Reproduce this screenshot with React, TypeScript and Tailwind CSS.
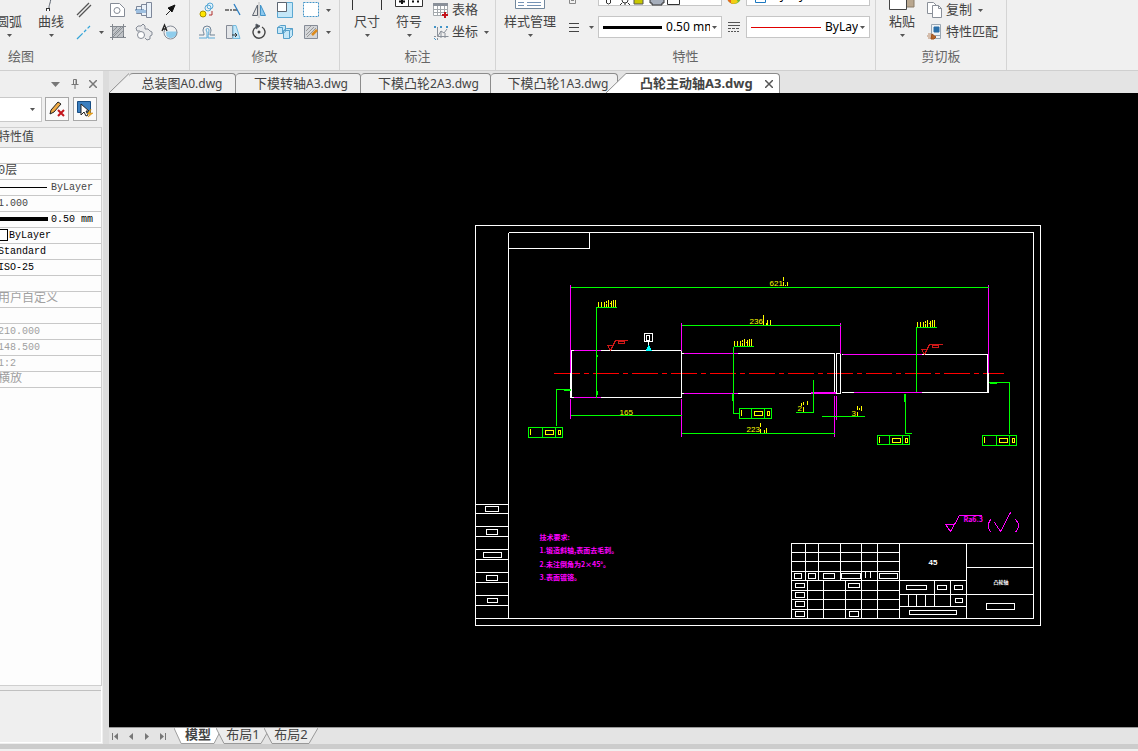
import { ReactNode } from "react";

interface DocTab {
  title: string;
  suffix: string;
  className: string;
}

interface PropertyRow {
  value: string;
  tone: string;
  sample?: "thin" | "thick" | "swatch";
}

export default function App() {
  return (
    <div className="flex h-screen flex-col overflow-hidden bg-[#f0f0f0] text-[13px] text-[#444] font-['Noto_Sans','Noto_Sans_CJK_SC',sans-serif]">
      <Ribbon />
      <div className="flex min-h-0 flex-1">
        <PropertiesPanel />
        <main className="flex min-w-0 flex-1 flex-col">
          <DocumentTabs />
          <div className="min-h-0 flex-1 bg-black">
            <Drawing />
          </div>
          <LayoutTabs />
        </main>
      </div>
      <footer className="h-[7px] border-b-2 border-[#f0f0f0] bg-[#ccc]" />
    </div>
  );
}

/* ---------- ribbon ---------- */

function Caret() {
  return (
    <svg width="5" height="3" viewBox="0 0 5 3" className="shrink-0" aria-hidden="true">
      <path d="M0 0h5L2.5 3z" fill="#555" />
    </svg>
  );
}

function Icon({ children }: { children: ReactNode }) {
  return (
    <svg width="18" height="18" viewBox="0 0 18 18" fill="none" stroke="#5d6570" strokeWidth="1" className="shrink-0" aria-hidden="true">
      {children}
    </svg>
  );
}

function RibbonGroup({ title, className, children }: { title: string; className: string; children: ReactNode }) {
  return (
    <section className={`flex shrink-0 flex-col border-r border-[#d4d4d4] ${className}`}>
      <div className="flex h-11 items-start">{children}</div>
      <h2 className="text-center leading-6 text-[#666]">{title}</h2>
    </section>
  );
}

function BigButton({ label, icon }: { label: string; icon?: ReactNode }) {
  return (
    <button className="-mt-[21px] flex shrink-0 flex-col items-center whitespace-nowrap">
      <svg width="32" height="32" viewBox="0 0 32 32" fill="none" stroke="#5d6570" className="-mx-1" aria-hidden="true">
        {icon}
      </svg>
      <span className="leading-5">{label}</span>
      <span className="flex h-2 items-center">
        <Caret />
      </span>
    </button>
  );
}

function IconButton({ label, caret, children }: { label: string; caret?: boolean; children: ReactNode }) {
  return (
    <button aria-label={label} className="flex h-[22px] items-center gap-1.5">
      <Icon>{children}</Icon>
      {caret && <Caret />}
    </button>
  );
}

function TextButton({ label, caret, children }: { label: string; caret?: boolean; children: ReactNode }) {
  return (
    <button className="flex h-[22px] items-center gap-0.5 whitespace-nowrap">
      <Icon>{children}</Icon>
      <span>{label}</span>
      {caret && (
        <span className="ml-1">
          <Caret />
        </span>
      )}
    </button>
  );
}

function Ribbon() {
  return (
    <header className="flex h-[71px] shrink-0 overflow-hidden border-b border-[#cfcfcf]">
      <RibbonGroup title="绘图" className="w-[190px] pr-[148px] [&>h2]:w-[42px]">
        <div className="-ml-1 flex gap-4">
          <BigButton label="圆弧" />
          <BigButton
            label="曲线"
            icon={
              <>
                <path d="M14 29C14 25 16 24 16 16" />
                <rect x="11.500" y="29.500" width="3" height="3" fill="#fff" stroke="#333" />
              </>
            }
          />
          <div className="-mt-px -ml-[5px] grid shrink-0 grid-cols-[34px_26px_26px_26px]">
            <IconButton label="平行线">
              <path d="M2 14L14 2M4 16L16 4" stroke="#555" strokeWidth="1.300" />
            </IconButton>
            <IconButton label="轮廓">
              <path d="M1.500 2.500h9l5 5v8h-14z" fill="#fff" stroke="#858b96" />
              <circle cx="8" cy="9.500" r="3" stroke="#858b96" />
            </IconButton>
            <IconButton label="轴">
              <path d="M1.500 5.500h5v7h-5zM6.500 3.500h5v11h-5zM11.500 1.500h5v15h-5z" fill="#eaf1f8" stroke="#7d879a" />
              <path d="M0 9h9" stroke="#3d6d9e" />
              <path d="M1 9h10v3H1z" fill="#9dbfe0" stroke="none" />
            </IconButton>
            <IconButton label="箭头">
              <path d="M5 14L10 9" stroke="#222" />
              <path d="M14 4L7 7l4 4z" fill="#111" stroke="#111" />
            </IconButton>
            <IconButton label="中心线" caret>
              <path d="M2 16L15 3" stroke="#35a5d8" strokeWidth="1.300" strokeDasharray="8 2 3 2" />
            </IconButton>
            <IconButton label="填充">
              <path d="M3.500 3.500h11v11h-11z" fill="#bfc2c6" />
              <path d="M1 3.500h16M1 14.500h16M3.500 1v16M14.500 1v12" stroke="#848990" />
              <path d="M4 8l4-4M4 12l8-8M4 14l10-10M8 14l6-6" stroke="#8b9095" />
            </IconButton>
            <IconButton label="齿轮">
              <path
                d="M6 9l-1-1H2l-1-3 2-2h3l2-2 2 2v3h3l2 2 2 1v3l-2 1v3l-3 1-2-2"
                fill="#e8e9eb"
                stroke="#858b96"
              />
              <circle cx="6" cy="12" r="3.500" fill="#fff" stroke="#858b96" />
            </IconButton>
            <IconButton label="局部放大">
              <path d="M5.500 9h10.500a6 6 0 0 1-10 4z" fill="#8fcdec" stroke="#8fcdec" />
              <circle cx="9.500" cy="9.500" r="6.500" stroke="#858b96" />
              <path d="M1 8l2.500-6L6 8M2 6h3" stroke="#222" strokeWidth="1.300" />
            </IconButton>
          </div>
        </div>
      </RibbonGroup>

      <RibbonGroup title="修改" className="w-[150px]">
        <div className="-mt-px ml-2 grid grid-cols-[26px_26px_26px_26px_30px]">
          <IconButton label="复制对象">
            <circle cx="5" cy="13" r="3" fill="#ffe600" stroke="#a79000" />
            <circle cx="12" cy="5" r="3" fill="#e3f3fc" stroke="#5aa9d6" />
            <circle cx="10" cy="7" r="3" stroke="#5aa9d6" />
            <path d="M11 14h3v-4" stroke="#b0302f" />
          </IconButton>
          <IconButton label="修剪">
            <path d="M1 9h4M6 9h2M9 9h4" stroke="#555" strokeWidth="1.300" />
            <path d="M10 3l6 11" stroke="#2b7fc4" strokeWidth="1.300" />
          </IconButton>
          <IconButton label="镜像">
            <path d="M7.500 4v10.500h-5z" fill="#e3e3e3" />
            <path d="M10.500 4v10.500h5z" fill="#8cc8ee" stroke="#4294c8" />
            <path d="M9 1v16" stroke="#bbb" />
          </IconButton>
          <IconButton label="缩放">
            <path d="M1.500 1.500h15v15h-15z" fill="#c4e7f8" stroke="#5ba8d2" />
            <path d="M1.500 1.500h9v9h-9z" fill="#fff" />
          </IconButton>
          <IconButton label="拉伸" caret>
            <path d="M1.500 1.500h15v14h-15z" fill="#fff" stroke="#4294c8" strokeDasharray="2 1" />
          </IconButton>
          <IconButton label="偏移">
            <path d="M1 12h5c0-3-1-3-1-5a4 4 0 0 1 8 0c0 2-1 2-1 5h5" stroke="#6f8295" />
            <path d="M1 15h8V9c0-1-1-1-1-2a1 1 0 0 1 3 0c0 3-1 4-1 8h7" stroke="#5aa9d6" />
          </IconButton>
          <IconButton label="拉长">
            <path d="M2.500 2.500h6v13h-6z" fill="#e3e5e8" stroke="#858b96" />
            <path d="M9 2.500h3l4 13H9z" fill="#c4e7f8" stroke="#74bce0" />
            <path d="M8 12h5M11 10l2 2-2 2" stroke="#333" />
          </IconButton>
          <IconButton label="旋转">
            <path d="M6 4a6 6 0 1 0 6 0" stroke="#444" strokeWidth="1.400" />
            <path d="M6 1v5l4-3z" fill="#444" />
            <circle cx="9" cy="9" r="1.500" fill="#444" stroke="none" />
          </IconButton>
          <IconButton label="分解">
            <path d="M1.500 4.500l3-2h5v6l-3 2h-5zM7.500 7.500l3-2h6v7l-3 3h-6zM1.500 4.500h5v6M7.500 7.500h6v8M13.500 7.500l3-2" fill="#c4e7f8" stroke="#559fc9" />
          </IconButton>
          <IconButton label="编辑填充" caret>
            <path d="M2.500 2.500h13v13h-13z" fill="#d4d6d9" stroke="#858b96" />
            <path d="M4 8l5-5M4 12l8-8M5 14l9-9" stroke="#999" />
            <path d="M10 12l5-5" stroke="#dc8b1e" strokeWidth="2.500" />
          </IconButton>
        </div>
      </RibbonGroup>

      <RibbonGroup title="标注" className="w-[156px]">
        <div className="ml-3.5 flex gap-4">
          <BigButton label="尺寸" icon={<path d="M1.500 8v23M30.500 8v23" stroke="#333" />} />
          <BigButton
            label="符号"
            icon={
              <>
                <path d="M2.500 12v15.500h27V12M15.500 12v15" fill="#fff" stroke="#333" />
                <path d="M6 22.500h6M9 20v5M19 22.500h2M24 22.500h2" stroke="#111" strokeWidth="2" />
              </>
            }
          />
        </div>
        <div className="-mt-px ml-2.5">
          <TextButton label="表格">
            <path d="M1.500 2.500h14v12h-14zM1.500 8.500h14M1.500 11.500h14M5.500 5v9.500M8.500 5v9.500M12.500 5v9.500" fill="#fff" stroke="#a4a9ad" />
            <path d="M1 2h15v3H1z" fill="#8a9099" stroke="none" />
            <path d="M13 11v6M10 14h6" stroke="#c3141c" strokeWidth="2" />
          </TextButton>
          <TextButton label="坐标" caret>
            <path d="M5.500 4v9.500h11M2 13.500h2M5.500 15v2M6 13l3-5 3 2 3-4M9 8v7M13 10v5" stroke="#8a9099" />
            <path d="M2 3l2 2M4 3L2 5M8 3l2 2M10 3L8 5M14 3l2 2M16 3l-2 2M2 15l2 2" stroke="#4294c8" />
          </TextButton>
        </div>
      </RibbonGroup>

      <RibbonGroup title="特性" className="w-[380px]">
        <div className="ml-2 flex shrink-0">
          <BigButton
            label="样式管理"
            icon={
              <>
                <path d="M1.500 8.500h29v21h-29z" fill="#fff" stroke="#71879c" />
                <path d="M4 23.500h6M13 23.500h14M4 26.500h6M13 26.500h14" stroke="#7593b5" />
              </>
            }
          />
        </div>
        <div className="-mt-[17px] ml-2.5 mr-1 flex w-7 shrink-0 flex-col gap-2.5">
          <svg width="18" height="23" fill="none" stroke="#888" aria-hidden="true">
            <path d="M3.500 12.500h6v8h-6zM5 17.500h3" />
          </svg>
          <button aria-label="线宽" className="flex h-[22px] items-center gap-2">
            <svg width="16" height="18" fill="none" stroke="#444" aria-hidden="true">
              <path d="M3 5.500h10M3 9.500h10M3 13.500h10" />
            </svg>
            <Caret />
          </button>
        </div>
        <div className="-mt-[17px] flex w-[124px] shrink-0 flex-col gap-2.5">
          <label className="flex h-[23px] items-center border border-[#c6c6c6] bg-white pl-1">
            <svg width="78" height="22" fill="none" stroke="#333" aria-hidden="true">
              <path d="M3.500 12v7q2 2 4 0v-7" />
              <circle cx="22" cy="16" r="3" />
              <path d="M17 21l2-2M25 19l2 2M22 19v2" />
              <path d="M31 13h9v7h-9z" fill="#c9c800" stroke="#555" />
              <path d="M47 13h14v6h-2v2H49v-2h-2z" fill="#a6aebb" />
              <path d="M64.500 8.500h12v12h-12z" fill="#fff" />
            </svg>
            <select aria-label="图层" className="min-w-0 flex-1 appearance-none pl-1 text-[12px] text-black">
              <option>0层</option>
            </select>
          </label>
          <LineSelect name="线宽值" value="0.50 mm" sample={<path d="M0 10.500h59" stroke="#000" strokeWidth="3" />} width="w-[61px]" />
        </div>
        <div className="-mt-[17px] flex w-6 shrink-0 flex-col items-center gap-2.5">
          <svg width="14" height="23" aria-hidden="true">
            <circle cx="7" cy="14" r="7" fill="#73b83c" />
            <path d="M7 14H0a7 7 0 0 0 7 7z" fill="#e8671b" />
            <path d="M4 14v6q3 2 7-1l-3-5z" fill="#f2ce14" />
          </svg>
          <svg width="14" height="22" stroke="#555" aria-hidden="true">
            <path d="M1 6.500h12M1 9.500h12" />
            <path d="M1 12.500h12" strokeDasharray="3 1" />
            <path d="M1 15.500h12" strokeDasharray="2 1" />
          </svg>
        </div>
        <div className="-mt-[17px] flex w-[124px] shrink-0 flex-col gap-2.5">
          <label className="flex h-[23px] items-center border border-[#c6c6c6] bg-white pl-[7px]">
            <svg width="14" height="20" fill="none" stroke="#1c78c0" aria-hidden="true">
              <path d="M1.500 6.500h10v11h-10z" />
            </svg>
            <select aria-label="颜色" className="min-w-0 flex-1 appearance-none pl-1 text-[12px] text-black">
              <option>ByLayer</option>
            </select>
          </label>
          <LineSelect name="线型" value="ByLayer" sample={<path d="M0 10.500h70" stroke="#e00000" />} width="w-[72px]" />
        </div>
      </RibbonGroup>

      <RibbonGroup title="剪切板" className="w-[131px]">
        <div className="ml-[13px] flex">
          <BigButton
            label="粘贴"
            icon={
              <>
                <path d="M20 12h8v16h-8z" fill="#b9a78f" stroke="#8a7c69" />
                <path d="M3.500 12.500h17v18h-17z" fill="#fff" stroke="#444" />
              </>
            }
          />
        </div>
        <div className="-mt-px ml-[11px]">
          <TextButton label="复制" caret>
            <path d="M1.500 1.500h6l3 3v8h-9z" fill="#fff" stroke="#8a9099" />
            <path d="M6.500 4.500h6l3 3v9h-9z" fill="#fff" stroke="#8a9099" />
            <path d="M12.500 4.500v3h3" stroke="#8a9099" />
          </TextButton>
          <TextButton label="特性匹配">
            <path d="M5.500 1.500h9v14h-9z" fill="#eef2f5" stroke="#9aa7b3" />
            <path d="M8 4h5v5H8z" fill="#2b6fa8" stroke="#2b6fa8" />
            <path d="M9 12.500h5" stroke="#9aa7b3" />
            <path d="M2 11h4M1 13h5M2 15h4" stroke="#b98a68" />
            <path d="M6 11l4 3-2 2H5z" fill="#b4652a" stroke="#a0521c" />
          </TextButton>
        </div>
      </RibbonGroup>
    </header>
  );
}

function LineSelect({ name, value, sample, width }: { name: string; value: string; sample: ReactNode; width: string }) {
  return (
    <label className="flex h-[22px] items-center gap-0.5 border border-[#c6c6c6] bg-white pr-1 pl-1">
      <svg height="20" className={`shrink-0 ${width}`} aria-hidden="true">
        {sample}
      </svg>
      <select aria-label={name} className="min-w-0 flex-1 appearance-none text-[12px] text-black">
        <option>{value}</option>
      </select>
      <Caret />
    </label>
  );
}

/* ---------- properties ---------- */

function PropertiesPanel() {
  const rows: PropertyRow[] = [
    { value: "", tone: "" },
    { value: "0层", tone: "text-[#444]" },
    { value: "ByLayer", tone: "text-[#444]", sample: "thin" },
    { value: "1.000", tone: "text-[#444]" },
    { value: "0.50 mm", tone: "text-black", sample: "thick" },
    { value: "ByLayer", tone: "text-black", sample: "swatch" },
    { value: "Standard", tone: "text-black" },
    { value: "ISO-25", tone: "text-black" },
    { value: "", tone: "" },
    { value: "用户自定义", tone: "text-[#a0a0a0]" },
    { value: "", tone: "" },
    { value: "210.000", tone: "text-[#a0a0a0]" },
    { value: "148.500", tone: "text-[#a0a0a0]" },
    { value: "1:2", tone: "text-[#a0a0a0]" },
    { value: "横放", tone: "text-[#a0a0a0]" },
  ];

  return (
    <aside className="flex w-[109px] shrink-0 flex-col overflow-hidden border-r-[6px] border-[#dcdcdc] bg-[#efefef]">
      <div className="flex h-[26px] shrink-0 items-center justify-end gap-2.5 pr-1.5">
        <button aria-label="菜单">
          <svg width="10" height="5" aria-hidden="true">
            <path d="M0 0h9L4.500 5z" fill="#777" />
          </svg>
        </button>
        <button aria-label="固定">
          <svg width="8" height="10" fill="none" stroke="#777" aria-hidden="true">
            <path d="M2.500 5V.5h3V5M5 1v4M.5 5.500h7M4 6v4" />
          </svg>
        </button>
        <button aria-label="关闭">
          <svg width="8" height="8" stroke="#777" strokeWidth="1.500" aria-hidden="true">
            <path d="M0 0l8 8M8 0L0 8" />
          </svg>
        </button>
      </div>
      <div className="mb-[5px] flex h-[25px] shrink-0 gap-[3px] pr-1.5">
        <div className="flex min-w-0 flex-1 items-center border border-l-0 border-[#c9c9c9] bg-white pr-1.5">
          <select aria-label="选择对象" className="min-w-0 flex-1 appearance-none">
            <option></option>
          </select>
          <Caret />
        </div>
        <button aria-label="编辑" className="flex h-6 w-6 shrink-0 items-center justify-center border border-[#a8a8a8] bg-[#fafafa]">
          <svg width="18" height="18" viewBox="0 0 18 18" fill="none" aria-hidden="true">
            <path d="M2 14l1-4 7-8 3 2-7 8z" fill="#f0ab45" stroke="#222" />
            <path d="M10 10l6 6M16 10l-6 6" stroke="#c3141c" strokeWidth="2" />
          </svg>
        </button>
        <button aria-label="快速选择" className="ml-px flex h-6 w-6 shrink-0 items-center justify-center border border-[#a8a8a8] bg-[#fafafa]">
          <svg width="18" height="18" viewBox="0 0 18 18" aria-hidden="true">
            <path d="M1.500 1.500h13v11h-13z" fill="#3b7fc0" stroke="#174d84" />
            <path d="M5 4v11l3-3 2 4 2-1-2-4h3z" fill="#fff" stroke="#222" />
            <path d="M15 9l-4 5h3l-2 3 5-4h-3z" fill="#f6b11c" stroke="#c97d0a" strokeWidth="0.500" />
          </svg>
        </button>
      </div>
      <div className="mr-px min-h-0 flex-1 border-y border-r border-[#cfcfcf] bg-[#fdfdfd]">
        <table className="w-full border-collapse text-[12px]">
          <thead>
            <tr className="border-b border-[#c8c8c8] bg-[#f0f0f0]">
              <th className="h-[19px] p-0 text-left leading-[18px] font-normal">
                <span className="-ml-0.5">特性值</span>
              </th>
            </tr>
          </thead>
          <tbody>
            {rows.map((row, index) => (
              <tr key={index} className="border-b border-[#c8c8c8]">
                <td className={`h-4 p-0 ${row.tone}`}>
                  <div className="-ml-0.5 flex h-[15px] items-center overflow-hidden font-['Liberation_Mono','Noto_Sans_CJK_SC',monospace] text-[12px] whitespace-nowrap">
                    {row.sample === "thin" && <span className="mr-1 h-px w-[49px] shrink-0 bg-black" />}
                    {row.sample === "thick" && <span className="mr-[3px] h-1 w-[50px] shrink-0 bg-black" />}
                    {row.sample === "swatch" && <span className="mr-px h-3 w-2.5 shrink-0 border border-black bg-white" />}
                    <span className={/^[ -~]*$/.test(row.value) ? "text-[10px]" : "text-[12px]"}>{row.value}</span>
                  </div>
                </td>
              </tr>
            ))}
          </tbody>
        </table>
      </div>
      <div className="mr-px mb-px h-[57px] shrink-0 border-r border-b border-[#fff] pt-1">
        <div className="h-full border-t border-[#c0c0c0]" />
      </div>
    </aside>
  );
}

/* ---------- document tabs ---------- */

function DocumentTabs() {
  const tabs: DocTab[] = [
    { title: "总装图", suffix: "A0.dwg", className: "w-[107px]" },
    { title: "下模转轴", suffix: "A3.dwg", className: "w-[125px] pl-1.5" },
    { title: "下模凸轮", suffix: "2A3.dwg", className: "w-[130px] pl-1.5" },
    { title: "下模凸轮", suffix: "1A3.dwg", className: "w-[127px] pl-2" },
  ];

  return (
    <nav className="flex h-[22px] shrink-0 overflow-hidden bg-[#e4e4e4] pt-0.5 leading-[18px]">
      <svg width="20" height="20" className="shrink-0" aria-hidden="true">
        <path d="M0 20L20 .5V20z" fill="#f0f0f0" />
        <path d="M0 20L20 .5" stroke="#8c8c8c" />
      </svg>
      {tabs.map((tab) => (
        <button
          key={tab.title + tab.suffix}
          className={`flex shrink-0 items-baseline justify-center rounded-t-sm border-t border-r border-[#8c8c8c] bg-[#f0f0f0] whitespace-nowrap ${tab.className}`}
        >
          {tab.title}
          <span className="text-[12px]">{tab.suffix}</span>
        </button>
      ))}
      <svg width="20" height="20" className="relative -ml-3 shrink-0" aria-hidden="true">
        <path d="M0 20L20 .5V20z" fill="#fff" />
        <path d="M0 20L20 .5" stroke="#8c8c8c" />
      </svg>
      <div className="flex w-[154px] shrink-0 items-start justify-between rounded-tr-sm border-t border-r border-[#8c8c8c] bg-white pr-1.5 pl-3.5">
        <button className="font-bold whitespace-nowrap">凸轮主动轴A3.dwg</button>
        <button aria-label="关闭标签" className="flex h-5 items-center">
          <svg width="8" height="8" stroke="#555" strokeWidth="1.500" aria-hidden="true">
            <path d="M0 0l8 8M8 0L0 8" />
          </svg>
        </button>
      </div>
    </nav>
  );
}

function LayoutTabs() {
  return (
    <nav className="flex h-[17px] shrink-0 overflow-hidden border-t border-[#999] bg-[#e4e4e4] leading-[13px]">
      <div className="flex w-[65px] shrink-0 items-center justify-between pr-2 pl-[3px]">
        <button aria-label="第一个">
          <svg width="7" height="7" fill="#777" aria-hidden="true">
            <path d="M0 0h1v7H0zM6 0v7L2 3.500z" />
          </svg>
        </button>
        <button aria-label="上一个">
          <svg width="5" height="7" fill="#777" aria-hidden="true">
            <path d="M4 0v7L0 3.500z" />
          </svg>
        </button>
        <button aria-label="下一个">
          <svg width="5" height="7" fill="#777" aria-hidden="true">
            <path d="M1 0v7l4-3.500z" />
          </svg>
        </button>
        <button aria-label="最后一个">
          <svg width="7" height="7" fill="#777" aria-hidden="true">
            <path d="M6 0h1v7H6zM1 0v7l4-3.500z" />
          </svg>
        </button>
      </div>
      <LayoutTab name="模型" active />
      <LayoutTab name="布局1" />
      <LayoutTab name="布局2" />
    </nav>
  );
}

function LayoutTab({ name, active }: { name: string; active?: boolean }) {
  return (
    <button className={`grid shrink-0 [&>*]:[grid-area:1/1] ${active ? "w-12" : "-ml-1.5 w-[54px]"}`}>
      <svg viewBox="0 0 54 16" preserveAspectRatio="none" className="h-4 w-full" aria-hidden="true">
        <path d="M0 0l8 15.500h37L54 0" fill={active ? "#fff" : "#ececec"} stroke="#999" />
      </svg>
      <span className={`text-center whitespace-nowrap ${active ? "font-bold" : ""}`}>{name}</span>
    </button>
  );
}

/* ---------- drawing ---------- */

const WHITE = "#fff";
const GREEN = "#0f0";
const MAGENTA = "#f0f";
const YELLOW = "#ff0";
const RED = "#d01818";

function Drawing() {
  return (
    <svg className="block h-full w-full" fill="none" shapeRendering="crispEdges" role="img" aria-label="凸轮主动轴">
      <g transform="translate(-108.5 -92.500)">
        <Sheet />
        <Shaft />
        <Dimensions />
        <Tolerance x={528} y={427} w={34} h={10} a={14} b={27} />
        <Tolerance x={739} y={408} w={32} h={10} a={12} b={25} />
        <Tolerance x={877} y={435} w={32} h={9} a={12} b={25} />
        <Tolerance x={982} y={435} w={34} h={10} a={14} b={27} />
        <Notes />
        <TitleBlock />
      </g>
    </svg>
  );
}

function Sheet() {
  return (
    <g stroke={WHITE}>
      <path d="M475 225H1040V625H475zM508 232H1033V618H475M508 232V618M508 248H589V232" />
      <path d="M475 504h33M475 513h33M475 526h33M475 536h33M475 549h33M475 559h33M475 572h33M475 582h33M475 595h33M475 605h33" />
      <path d="M485 506h13v5h-13zM486 529h11v5h-11zM483 552h18v5h-18zM486 575h11v5h-11zM487 598h10v4h-10z" />
    </g>
  );
}

function Shaft() {
  return (
    <g>
      <path d="M553 373H1003" stroke="#f00" strokeDasharray="26 4 5 4" />
      <path d="M571 350H681V397H571zM570 372V397M681 353H834M681 393H834M834 353V393M836 353H840V393H836zM841 354H987V392H841M988 372V392" stroke={WHITE} />
      <path d="M573 350H600M573 397H600M683 353H737M683 393H737M810 392H835M810 393H835M842 354H921M853 392H921" stroke={MAGENTA} />
      <path d="M570 284V372M570 398V418M681 322V350M681 398V436M840 322V353M834 395V436M836 395V419M988 284V372" stroke={MAGENTA} />
      <path d="M644 333h8v8h-8zM646 335h3v5h-3zM648 341v4" stroke={WHITE} />
      <path d="M648 344l3 6h-6z" fill="#0ff" />
      <path d="M607 345h6l-3 5zM610 350l5-10h12M618 341h6v2h-6z" stroke={RED} />
      <path d="M921 349h6l-3 5zM924 354l5-10h13M932 345h6v2h-6z" stroke={RED} />
    </g>
  );
}

// stacked limits that collapse into short strokes at this zoom level
function Fit({ x, y }: { x: number; y: number }) {
  return <path transform={`translate(${x} ${y})`} d="M0 2v5M3 2v5M6 2v5M8 1v2M8 4v3M10 0v7M12 3v1M13 1v6M15 0v7M17 0v7" stroke={YELLOW} />;
}

function Dimensions() {
  return (
    <g>
      <path d="M570 287H988M681 325H840M570 415H681M681 433H834" stroke={GREEN} />
      <path d="M596 397V307H616M597 354v2M597 390v4M733 346H753M733 346V413H739M732 393v7M916 391V327H936M915 386h1" stroke={GREEN} />
      <path d="M556 425V389H570M563 390H570M905 393V433H911M904 393v8M988 382H1009V433M989 383H996M813 379V412H795M821 416H864" stroke={GREEN} />
      <Fit x={598} y={299} />
      <Fit x={734} y={338} />
      <Fit x={917} y={319} />
      <path d="M783 276v4M783 281v4M785 284v1M787 281v4M763 314v10M766 322v2M767 319v5M770 319v5M760 422v4M760 428v4M764 429v3M766 427v5" stroke={YELLOW} />
      <path d="M801 402v3M803 401v3M803 406v5M807 400v4M857 405v4M857 411v4M859 407v2M861 405v5" stroke={YELLOW} />
      <g fill={YELLOW} className="font-['Liberation_Sans_Narrow','Liberation_Sans',sans-serif] text-[8px]">
        <text x="769" y="285">621</text>
        <text x="749" y="323">236</text>
        <text x="619" y="414">165</text>
        <text x="746" y="431">223</text>
        <text x="797" y="410">2</text>
        <text x="851" y="415">3</text>
      </g>
    </g>
  );
}

function Tolerance({ x, y, w, h, a, b }: { x: number; y: number; w: number; h: number; a: number; b: number }) {
  return (
    <g transform={`translate(${x} ${y})`}>
      <path d={`M0 0h${w}v${h}H0zM${a} 0v${h}M${b} 0v${h}`} stroke={GREEN} />
      <path d={`M2 1v6M${a + 3} 3h8v4h-8zM${b + 3} 3h2v4h-2z`} stroke={YELLOW} />
    </g>
  );
}

function Notes() {
  return (
    <g>
      <g fill={MAGENTA} className="font-['Liberation_Sans_Narrow','Noto_Sans_CJK_SC',sans-serif] text-[7px] font-bold">
        <text x="539" y="539">技术要求:</text>
        <text x="539" y="552">1.锻造斜轴,表面去毛刺。</text>
        <text x="539" y="566">2.未注倒角为2×45°。</text>
        <text x="539" y="579">3.表面镀铬。</text>
        <text x="963" y="521">Ra6.3</text>
      </g>
      <path d="M945 524h9l-4 7zM950 531l9-16h22M990 519l-2 4v4l2 5M994 522l6 9 10-19M1015 519l3 4v4l-3 5" stroke={MAGENTA} />
    </g>
  );
}

function TitleBlock() {
  return (
    <g stroke={WHITE}>
      <path d="M791 618V543H1033M899 543V618M966 543V618" />
      <path d="M805 543V580M818 543V580M840 543V580M861 543V618M877 543V618M807 580V618M823 580V618M845 580V618" />
      <path d="M791 552H899M791 561H899M791 571H899M791 580H966M791 590H899M791 599H899M791 609H899" />
      <path d="M899 594H966M899 606H966M934 580V606M950 580V606M908 594V606M916 594V606M925 594V606M966 567H1033M966 594H1033" />
      <path d="M794 573h7v5h-7zM808 573h7v5h-7zM823 573h11v5h-11zM841 573h19v5h-19zM879 573h18v5h-18zM865 570v7M870 570v7" />
      <path d="M795 583h9v4h-9zM795 592h9v5h-9zM795 601h9v5h-9zM795 611h9v5h-9zM848 583h11v4h-11zM849 611h9v5h-9z" />
      <path d="M906 585h20v4h-20zM937 585h9v4h-9zM954 585h8v4h-8zM955 598h7v4h-7zM909 610h47v4h-47zM986 603h28v6h-28z" />
      <g fill={WHITE} stroke="none" className="font-['Liberation_Sans_Narrow','Liberation_Sans','Noto_Sans_CJK_SC',sans-serif] font-bold">
        <text x="928" y="564" className="text-[8px]">45</text>
        <text x="993" y="583" className="text-[5px]">凸轮轴</text>
      </g>
    </g>
  );
}
